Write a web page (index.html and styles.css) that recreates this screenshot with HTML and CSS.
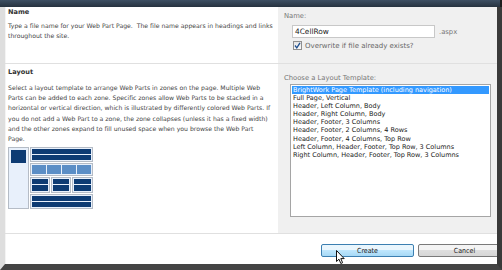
FILE: index.html
```html
<!DOCTYPE html>
<html lang="en">
<head>
    <meta charset="UTF-8">
    <title>New Web Part Page</title>
    <link rel="stylesheet" href="styles.css">
</head>
<body>
    <div class="window">
        <div class="titlebar"></div>
        <div class="frame">
            <section class="row row-name">
                <div class="desc-col">
                    <h3>Name</h3>
                    <p>Type a file name for your Web Part Page.&nbsp; The file name appears in headings and links throughout the site.</p>
                </div>
                <div class="field-col">
                    <div class="field-label">Name:</div>
                    <div class="name-input">
                        <span class="text-box">4CellRow</span>
                        <span class="ext">.aspx</span>
                    </div>
                    <label class="overwrite">
                        <span class="check">
                            <svg width="9" height="9" viewBox="0 0 9 9">
                                <path d="M2 4.5 L3.8 6.8 L7 1.8" fill="none" stroke="#1f4f8f" stroke-width="1.3"/>
                            </svg>
                        </span>
                        Overwrite if file already exists?
                    </label>
                </div>
            </section>

            <section class="row row-layout">
                <div class="desc-col">
                    <h3>Layout</h3>
                    <p>Select a layout template to arrange Web Parts in zones on the page. Multiple Web Parts can be added to each zone. Specific zones allow Web Parts to be stacked in a horizontal or vertical direction, which is illustrated by differently colored Web Parts. If you do not add a Web Part to a zone, the zone collapses (unless it has a fixed width) and the other zones expand to fill unused space when you browse the Web Part<br>Page.</p>
                    <svg class="preview" width="85" height="62" viewBox="0 0 85 62">
                        <!-- left column -->
                        <rect x="0.5" y="0.5" width="20" height="61" fill="#e8f0fb" stroke="#b5bcc6"/>
                        <rect x="3" y="3" width="15" height="13" fill="#0d3b73"/>
                        <!-- header -->
                        <rect x="22.5" y="0.5" width="62" height="14" fill="#e8f0fb" stroke="#b5bcc6"/>
                        <rect x="24" y="2" width="59" height="5" fill="#0d3b73"/>
                        <rect x="24" y="8" width="59" height="5" fill="#0d3b73"/>
                        <!-- top row -->
                        <rect x="22.5" y="16.5" width="62" height="12" fill="#e8f0fb" stroke="#b5bcc6"/>
                        <rect x="24" y="18" width="14" height="9" fill="#5b8ec6"/>
                        <rect x="39" y="18" width="14" height="9" fill="#5b8ec6"/>
                        <rect x="54" y="18" width="14" height="9" fill="#5b8ec6"/>
                        <rect x="69" y="18" width="14" height="9" fill="#5b8ec6"/>
                        <!-- three columns -->
                        <rect x="22.5" y="30.5" width="19" height="15" fill="#e8f0fb" stroke="#b5bcc6"/>
                        <rect x="24" y="32" width="16" height="5" fill="#0d3b73"/>
                        <rect x="24" y="38" width="16" height="6" fill="#0d3b73"/>
                        <rect x="43.5" y="30.5" width="19" height="15" fill="#e8f0fb" stroke="#b5bcc6"/>
                        <rect x="45" y="32" width="16" height="5" fill="#0d3b73"/>
                        <rect x="45" y="38" width="16" height="6" fill="#0d3b73"/>
                        <rect x="64.5" y="30.5" width="20" height="15" fill="#e8f0fb" stroke="#b5bcc6"/>
                        <rect x="66" y="32" width="17" height="5" fill="#0d3b73"/>
                        <rect x="66" y="38" width="17" height="6" fill="#0d3b73"/>
                        <!-- footer -->
                        <rect x="22.5" y="47.5" width="62" height="14" fill="#e8f0fb" stroke="#b5bcc6"/>
                        <rect x="24" y="49" width="59" height="5" fill="#0d3b73"/>
                        <rect x="24" y="55" width="59" height="5" fill="#0d3b73"/>
                    </svg>
                </div>
                <div class="field-col">
                    <div class="field-label choose">Choose a Layout Template:</div>
                    <ul class="listbox">
                        <li class="selected">BrightWork Page Template (including navigation)</li>
                        <li>Full Page, Vertical</li>
                        <li>Header, Left Column, Body</li>
                        <li>Header, Right Column, Body</li>
                        <li>Header, Footer, 3 Columns</li>
                        <li>Header, Footer, 2 Columns, 4 Rows</li>
                        <li>Header, Footer, 4 Columns, Top Row</li>
                        <li>Left Column, Header, Footer, Top Row, 3 Columns</li>
                        <li>Right Column, Header, Footer, Top Row, 3 Columns</li>
                    </ul>
                </div>
            </section>

            <div class="actions">
                <button class="btn btn-hover">Create</button>
                <button class="btn">Cancel</button>
                <svg class="cursor" width="10" height="15" viewBox="0 0 10 15">
                    <path d="M0.5 0.5 L0.5 11.5 L3 9.2 L4.8 13.5 L6.6 12.7 L4.8 8.6 L8.2 8.6 Z" fill="#fff" stroke="#111" stroke-width="1" stroke-linejoin="round"/>
                </svg>
            </div>
        </div>
    </div>
</body>
</html>
```

FILE: styles.css
```css
body {
    margin: 0;
    padding: 0;
    background-color: #fff;
    font-family: "DejaVu Sans", sans-serif;
}

.window {
    width: 502px;
    height: 270px;
    display: flex;
    flex-direction: column;
    overflow: hidden;
}

.titlebar {
    height: 7px;
    background: linear-gradient(#3d4f63, #26323f);
    border-right: 2px solid #1d1d1d;
}

.frame {
    flex: 1;
    display: flex;
    flex-direction: column;
    background-color: #fff;
    border-left: 5px solid #dedede;
    border-right: 5px solid #3a3a3a;
    border-bottom: 6px solid #444;
    box-shadow: inset 1px 0 0 #f4f4f4;
}

.row {
    display: grid;
    grid-template-columns: 273px 1fr;
    border-bottom: 1px solid #e0e0e0;
}

.row-name {
    height: 56px;
}

.row-layout {
    height: 169px;
}

.desc-col {
    padding: 1px 2px 0 3px;
    color: #444;
}

.desc-col h3 {
    margin: 0;
    font-size: 6.6px;
    line-height: 9px;
    font-weight: bold;
    color: #333;
}

.desc-col p {
    margin: 4px 0 0;
    font-size: 6.15px;
    line-height: 10.2px;
}

.row-layout .desc-col {
    padding-top: 4px;
}

.row-layout .desc-col p {
    margin-top: 6px;
}

.preview {
    display: block;
    margin-top: 3px;
}

.field-col {
    background-color: #f0f0f0;
    padding: 5px 0 0 6px;
}

.field-label {
    font-size: 6.8px;
    line-height: 9px;
    color: #777;
}

.name-input {
    display: flex;
    align-items: center;
    gap: 4px;
    margin: 4px 0 0 8px;
}

.text-box {
    width: 139px;
    height: 11px;
    padding-left: 2px;
    background-color: #fff;
    border: 1px solid #c8c8c8;
    font-size: 7.4px;
    line-height: 11px;
    color: #222;
}

.ext {
    font-size: 6.8px;
    color: #777;
}

.overwrite {
    display: flex;
    align-items: center;
    gap: 3px;
    margin: 3px 0 0 9px;
    font-size: 7px;
    color: #666;
}

.check {
    width: 9px;
    height: 9px;
    box-sizing: border-box;
    border: 1px solid #8f8f8f;
    background: linear-gradient(#e4e4e4, #fafafa);
    display: flex;
}

.check svg {
    margin: -1px;
}

.row-layout .field-col {
    padding-top: 10px;
}

.listbox {
    list-style: none;
    margin: 1px 0 0 6px;
    padding: 1px 1px;
    width: 197px;
    height: 129px;
    background-color: #fff;
    border: 1px solid #a5a5a5;
    font-size: 6.5px;
    line-height: 8.1px;
    color: #1a1a1a;
}

.listbox li {
    padding-left: 1px;
    white-space: nowrap;
}

.listbox li.selected {
    background-color: #3399ff;
    color: #fff;
}

.actions {
    position: relative;
    flex: 1;
    display: flex;
    align-items: flex-start;
    gap: 4px;
    padding: 10px 0 0 316px;
    overflow: hidden;
}

.btn {
    flex: none;
    width: 93px;
    height: 13px;
    padding: 0;
    border: 1px solid #7a7a7a;
    border-radius: 2px;
    background: linear-gradient(#f4f4f4 50%, #dedede 50%, #d6d6d6);
    font-family: "DejaVu Sans Condensed", sans-serif;
    font-size: 7px;
    color: #222;
}

.btn-hover {
    border-color: #3c7fb1;
    background: linear-gradient(#eaf6fd 50%, #bee6fd 50%, #a7d9f5);
}

.cursor {
    position: absolute;
    left: 331px;
    top: 16px;
}
```
